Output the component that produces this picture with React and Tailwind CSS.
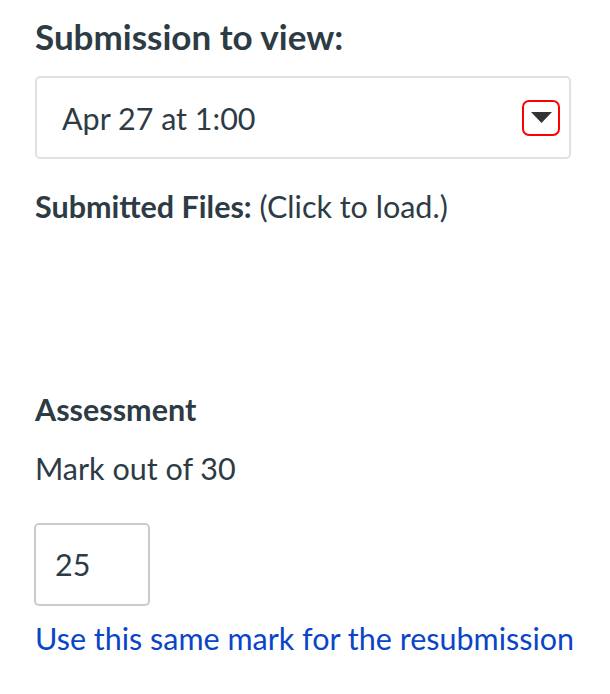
export default function App() {
  return (
    <div className="min-h-screen bg-white text-[#2d3b45] font-['Lato','Liberation_Sans',sans-serif]">
      <div className="pl-[35px] pr-[39px] pt-[16px]">
        <h2 className="text-[35px] font-bold leading-[40px]">Submission to view:</h2>

        <div className="mt-[20px] h-[83px] flex items-center justify-between rounded-[5px] border-2 border-[#dde2e7] pl-[25px] pr-[9px]">
          <span className="pt-[2px] text-[30.5px]">Apr 27 at 1:00</span>
          <span className="flex h-[36px] w-[38px] items-center justify-center rounded-[7px] border-[2.5px] border-[#ff0000]">
            <svg width="21" height="11" viewBox="0 0 21 11">
              <path d="M0 0 H21 L10.5 11 Z" fill="#333333" />
            </svg>
          </span>
        </div>

        <p className="mt-[29px] text-[30.5px] leading-[36px]">
          <span className="font-bold">Submitted Files:</span> (Click to load.)
        </p>

        <h3 className="mt-[167px] text-[30.5px] font-bold leading-[36px]">Assessment</h3>

        <p className="mt-[23px] text-[30.5px] leading-[36px]">Mark out of 30</p>

        <div className="-ml-[1px] mt-[37px] flex h-[83px] w-[116px] items-center rounded-[5px] border-2 border-[#cbcbcb] pl-[19px]">
          <span className="text-[30.5px]">25</span>
        </div>

        <a href="#" className="mt-[14px] block whitespace-nowrap text-[30.5px] leading-[36px] text-[#0b45c7]">
          Use this same mark for the resubmission
        </a>
      </div>
    </div>
  );
}
